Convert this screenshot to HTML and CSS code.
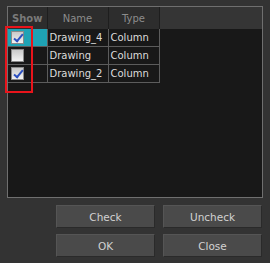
FILE: index.html
```html
<!DOCTYPE html>
<html lang="en">
<head>
    <meta charset="UTF-8">
    <title>Show Columns</title>
    <link rel="stylesheet" href="styles.css">
</head>
<body>

    <div class="dialog">
        <div class="list-panel">
            <table class="col-table">
                <colgroup>
                    <col class="c-show">
                    <col class="c-name">
                    <col class="c-type">
                </colgroup>
                <thead>
                    <tr>
                        <th class="show-head">Show</th>
                        <th>Name</th>
                        <th>Type</th>
                    </tr>
                </thead>
                <tbody>
                    <tr>
                        <td class="show-cell selected"><span class="check on"></span></td>
                        <td>Drawing_4</td>
                        <td>Column</td>
                    </tr>
                    <tr>
                        <td class="show-cell"><span class="check"></span></td>
                        <td>Drawing</td>
                        <td>Column</td>
                    </tr>
                    <tr>
                        <td class="show-cell"><span class="check on"></span></td>
                        <td>Drawing_2</td>
                        <td>Column</td>
                    </tr>
                </tbody>
            </table>
            <div class="highlight"></div>
        </div>

        <div class="buttons">
            <button>Check</button>
            <button>Uncheck</button>
            <button>OK</button>
            <button>Close</button>
        </div>
    </div>

</body>
</html>
```

FILE: styles.css
```css
body {
    margin: 0;
    background-color: #333333;
    font-family: 'DejaVu Sans', sans-serif;
    font-size: 10px;
}

.dialog {
    padding: 6px 7px 0 7px;
}

.list-panel {
    position: relative;
    width: 254px;
    height: 190px;
    border: 1px solid #6f6f6f;
    background-color: #181818;
    background-image: linear-gradient(#353535, #353535);
    background-size: 100% 22px;
    background-repeat: no-repeat;
}

.col-table {
    border-collapse: collapse;
    table-layout: fixed;
    width: 151px;
}

.c-show {
    width: 39px;
}

.c-name {
    width: 61px;
}

.c-type {
    width: 51px;
}

.col-table th {
    height: 22px;
    padding: 0;
    background-color: #2d2d2d;
    color: #8c8c8c;
    font-weight: normal;
    border-right: 1px solid #1e1e1e;
    text-align: center;
}

.col-table th.show-head {
    color: #7a7a7a;
    font-weight: bold;
}

.col-table td {
    height: 17px;
    padding: 0 0 0 2px;
    color: #dcdcdc;
    border: 1px solid #5c5c5c;
    border-top: none;
    white-space: nowrap;
    overflow: hidden;
}

.col-table td.show-cell {
    border-left: none;
    padding-left: 3px;
}

.col-table td.selected {
    background-color: #1fa3b5;
}

.check {
    display: block;
    width: 11px;
    height: 11px;
    border: 1px solid #8a8a8a;
    background: linear-gradient(#c9c9c9, #f2f2f2);
    position: relative;
}

.check.on::after {
    content: "";
    position: absolute;
    left: 4px;
    top: 0;
    width: 3px;
    height: 8px;
    border: solid #2b4fbf;
    border-width: 0 2px 2px 0;
    transform: rotate(40deg);
}

.highlight {
    position: absolute;
    left: -3px;
    top: 19px;
    width: 24px;
    height: 63px;
    border: 2px solid #e8141b;
}

.buttons {
    display: grid;
    grid-template-columns: 99px 99px;
    column-gap: 8px;
    row-gap: 6px;
    margin: 7px 0 0 49px;
}

.buttons button {
    height: 23px;
    padding: 0;
    background-color: #4a4a4a;
    color: #d2d2d2;
    font-family: 'DejaVu Sans', sans-serif;
    font-size: 10.5px;
    border: 1px solid #2a2a2a;
    border-top-color: #555555;
    border-left-color: #555555;
}
```
